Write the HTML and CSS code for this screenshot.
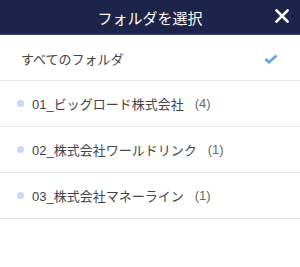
FILE: index.html
```html
<!DOCTYPE html>
<html lang="ja">
<head>
<meta charset="utf-8">
<link rel="stylesheet" href="styles.css">
</head>
<body>
<div class="sheet">
  <header class="bar">
    <span class="title">フォルダを選択</span>
    <button class="close" aria-label="閉じる">
      <svg width="14" height="14" viewBox="0 0 14 14"><path d="M1.5 1.5 L12.5 12.5 M12.5 1.5 L1.5 12.5" stroke="#fff" stroke-width="2.6" stroke-linecap="square" fill="none"/></svg>
    </button>
  </header>
  <ul class="list">
    <li class="item all">
      <span class="name">すべてのフォルダ</span>
      <svg class="check" width="14" height="10" viewBox="0 0 14 10"><path d="M1.5 5 L5 8.3 L12.5 1.5" stroke="#6d9ee6" stroke-width="2.6" fill="none" stroke-linejoin="miter"/></svg>
    </li>
    <li class="item folder"><span class="dot"></span><span class="name">01_ビッグロード株式会社</span><span class="count">(4)</span></li>
    <li class="item folder"><span class="dot"></span><span class="name">02_株式会社ワールドリンク</span><span class="count">(1)</span></li>
    <li class="item folder"><span class="dot"></span><span class="name">03_株式会社マネーライン</span><span class="count">(1)</span></li>
  </ul>
</div>
</body>
</html>
```
FILE: styles.css
```css
* { box-sizing: border-box; }
html, body { margin: 0; padding: 0; background: #fff; }
body {
  font-family: "Liberation Sans", "Noto Sans CJK JP", sans-serif;
  width: 300px;
  height: 267px;
  overflow: hidden;
}
.bar {
  height: 35px;
  background: #1c2549;
  border-bottom: 1px solid #3a4268;
  display: flex;
  align-items: center;
  justify-content: center;
  position: relative;
}
.title {
  color: #fff;
  font-size: 15px;
  font-weight: 400;
  letter-spacing: 0;
}
.close {
  position: absolute;
  right: 11px;
  top: 9px;
  width: 14px;
  height: 14px;
  padding: 0;
  border: 0;
  background: none;
  display: block;
}
.close svg { display: block; }
.list { list-style: none; margin: 0; padding: 0; }
.item {
  height: 46px;
  border-bottom: 1px solid #e6e6e6;
  display: flex;
  align-items: center;
  font-size: 13px;
  color: #444;
}
.all { padding: 2px 22px 0 21px; justify-content: space-between; }
.folder { padding: 0 0 0 17px; }
.dot {
  width: 7px;
  height: 7px;
  border-radius: 50%;
  background: #c8d8f6;
  margin-right: 8px;
  flex: none;
}
.count { margin-left: 11px; color: #6a6a6a; }
.check { display: block; }
```
